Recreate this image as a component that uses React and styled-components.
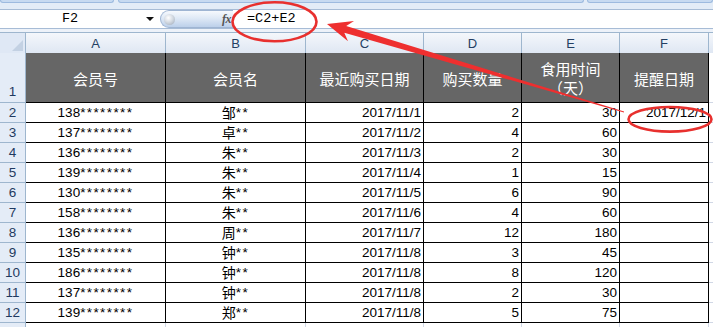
import React from "react";
import styled, { createGlobalStyle } from "styled-components";

const GlobalStyle = createGlobalStyle`
  html, body { margin: 0; padding: 0; background: #fff; }
  body { font-family: "Liberation Sans", Arial, sans-serif; }
`;

const Frame = styled.div`
  position: relative;
  width: 713px;
  height: 327px;
  overflow: hidden;
  background: #fff;
`;

const TopStrip = styled.div`
  display: flex;
  align-items: flex-start;
  height: 9px;
  background: #e3ecf7;
`;

const Tab = styled.div`
  box-sizing: border-box;
  height: 3px;
  width: ${(p) => (p.$w ? `${p.$w}px` : "auto")};
  flex: ${(p) => (p.$grow ? "1" : "none")};
  margin-left: ${(p) => p.$ml || 0}px;
  background: #c7daf1;
  border: 1px solid #9dbadf;
  border-top: none;
  border-radius: 0 0 3px 3px;
`;

const FormulaRow = styled.div`
  box-sizing: border-box;
  display: flex;
  align-items: stretch;
  height: 20px;
  border-top: 1px solid #a7bcd6;
  border-bottom: 1px solid #a7bcd6;
  background: #fff;
`;

const NameBox = styled.div`
  width: 158px;
  display: flex;
  align-items: center;
`;

const MonoText = styled.span`
  font-family: "Liberation Mono", "DejaVu Sans Mono", monospace;
  font-size: 13.5px;
  color: #000;
  line-height: 18px;
`;

const NameText = styled(MonoText)`
  width: 140px;
  text-align: center;
`;

const DropArrow = styled.span`
  margin-left: 6px;
  width: 0;
  height: 0;
  border-left: 4px solid transparent;
  border-right: 4px solid transparent;
  border-top: 4px solid #111;
`;

const FxButton = styled.div`
  box-sizing: border-box;
  margin-left: 2px;
  width: 73px;
  display: flex;
  align-items: center;
  padding-left: 3px;
  border: 1px solid #9fb5d3;
  border-right: none;
  border-radius: 9px 0 0 9px;
  background: linear-gradient(#f6f9fd 0%, #dfe9f6 45%, #bcd0ea 100%);
`;

const Knob = styled.span`
  width: 11px;
  height: 11px;
  border-radius: 50%;
  background: radial-gradient(circle at 40% 35%, #ffffff 0%, #d5dbe3 45%, #9aa6b5 100%);
`;

const FxLabel = styled.span`
  margin-left: auto;
  margin-right: 2px;
  font-family: "Liberation Serif", "Times New Roman", serif;
  font-style: italic;
  font-weight: bold;
  font-size: 12px;
  color: #555;
  letter-spacing: -0.5px;
`;

const FormulaInput = styled(MonoText)`
  flex: 1;
  padding-left: 14px;
`;

const Gap = styled.div`
  height: 3px;
  background: #edf2f9;
`;

const Sheet = styled.div`
  display: grid;
  grid-template-columns: 26px 140px 140px 118px 98px 98px 89px 1fr;
  grid-template-rows: 21px 50px repeat(11, 20px) 20px;
`;

const HeadBase = styled.div`
  box-sizing: border-box;
  border-top: 1px solid #9eb6ce;
  border-right: 1px solid #9eb6ce;
  background: linear-gradient(#f4f7fb, #dfe7f3);
`;

const Corner = styled(HeadBase)`
  display: flex;
  align-items: flex-end;
  justify-content: flex-end;
  padding: 0 2px 2px 0;
  background: #dfe8f5;
`;

const CornerTri = styled.span`
  width: 11px;
  height: 11px;
  background: #c3d1e3;
  clip-path: polygon(100% 0, 100% 100%, 0 100%);
`;

const ColHead = styled(HeadBase)`
  display: flex;
  align-items: center;
  justify-content: center;
  font-size: 13px;
  color: #243f63;
  padding-top: 1px;
`;

const RowHead = styled.div`
  box-sizing: border-box;
  display: flex;
  justify-content: center;
  align-items: ${(p) => (p.$bottom ? "flex-end" : "center")};
  padding-bottom: ${(p) => (p.$bottom ? "1px" : "0")};
  border-right: 1px solid #9eb6ce;
  border-bottom: 1px solid #9eb6ce;
  background: #e4ecf7;
  font-size: 13.5px;
  line-height: 19px;
  color: #1f3a60;
`;

const HeaderCell = styled.div`
  box-sizing: border-box;
  display: flex;
  align-items: center;
  justify-content: center;
  text-align: center;
  border-right: 1px solid #000;
  border-bottom: 1px solid #000;
  background: #666666;
  color: #fff;
  font-family: "Noto Sans CJK SC", "Liberation Sans", sans-serif;
  font-size: 15px;
  line-height: 19px;
  padding-top: 1px;
`;

const Cell = styled.div`
  box-sizing: border-box;
  display: flex;
  align-items: center;
  justify-content: ${(p) => (p.$align === "right" ? "flex-end" : "center")};
  padding-right: ${(p) => (p.$align === "right" ? "2px" : "0")};
  border-right: 1px solid ${(p) => (p.$light ? "#d0d7e5" : "#000")};
  border-bottom: 1px solid ${(p) => (p.$light ? "#d0d7e5" : "#000")};
  background: #fff;
  color: #000;
  font-family: "Liberation Sans", "Noto Sans CJK SC", sans-serif;
  font-size: 13.5px;
  line-height: 19px;
  white-space: nowrap;
`;

const Filler = styled.div`
  box-sizing: border-box;
  border-bottom: 1px solid #d0d7e5;
  background: #fff;
`;

const HeadFiller = styled(HeadBase)`
  border-right: none;
`;

const Stars = styled.span`
  letter-spacing: 1.4px;
`;

const CJK = styled.span`
  font-family: "Noto Sans CJK SC", sans-serif;
  font-size: 14px;
`;

const Overlay = styled.svg`
  position: absolute;
  left: 0;
  top: 0;
  width: 713px;
  height: 327px;
  pointer-events: none;
`;

const rows = [
  ["138", "邹", "2017/11/1", 2, 30, "2017/12/1"],
  ["137", "卓", "2017/11/2", 4, 60],
  ["136", "朱", "2017/11/3", 2, 30],
  ["139", "朱", "2017/11/4", 1, 15],
  ["130", "朱", "2017/11/5", 6, 90],
  ["158", "朱", "2017/11/6", 4, 60],
  ["136", "周", "2017/11/7", 12, 180],
  ["135", "钟", "2017/11/8", 3, 45],
  ["186", "钟", "2017/11/8", 8, 120],
  ["137", "钟", "2017/11/8", 2, 30],
  ["139", "郑", "2017/11/8", 5, 75],
];

const cols = ["A", "B", "C", "D", "E", "F"];

// Tapered annotation arrow geometry
const T = [327, 24];
const E = [624, 112];
const len = Math.hypot(E[0] - T[0], E[1] - T[1]);
const u = [(E[0] - T[0]) / len, (E[1] - T[1]) / len];
const n = [-u[1], u[0]];
const at = (d, w) => [T[0] + u[0] * d + n[0] * w, T[1] + u[1] * d + n[1] * w];
const arrowPts = [
  T,
  at(25, -10.5),
  at(19, -3.4),
  [E[0] - n[0] * 0.4, E[1] - n[1] * 0.4],
  [E[0] + n[0] * 0.4, E[1] + n[1] * 0.4],
  at(19, 3.4),
  at(25, 10.5),
]
  .map((p) => `${p[0].toFixed(1)},${p[1].toFixed(1)}`)
  .join(" ");

export default function App() {
  return (
    <>
      <GlobalStyle />
      <Frame>
        <TopStrip>
          <Tab $w={114} />
          <Tab $w={466} $ml={4} />
          <Tab $grow $ml={3} />
        </TopStrip>
        <FormulaRow>
          <NameBox>
            <NameText>F2</NameText>
            <DropArrow />
          </NameBox>
          <FxButton>
            <Knob />
            <FxLabel>fx</FxLabel>
          </FxButton>
          <FormulaInput>=C2+E2</FormulaInput>
        </FormulaRow>
        <Gap />
        <Sheet>
          <Corner>
            <CornerTri />
          </Corner>
          {cols.map((c) => (
            <ColHead key={c}>{c}</ColHead>
          ))}
          <HeadFiller />

          <RowHead $bottom>1</RowHead>
          <HeaderCell>会员号</HeaderCell>
          <HeaderCell>会员名</HeaderCell>
          <HeaderCell>最近购买日期</HeaderCell>
          <HeaderCell>购买数量</HeaderCell>
          <HeaderCell>
            食用时间
            <br />
            （天）
          </HeaderCell>
          <HeaderCell>提醒日期</HeaderCell>
          <Filler />

          {rows.map((r, i) => (
            <React.Fragment key={i}>
              <RowHead>{i + 2}</RowHead>
              <Cell>
                {r[0]}
                <Stars>********</Stars>
              </Cell>
              <Cell>
                <CJK>{r[1]}</CJK>
                <Stars>**</Stars>
              </Cell>
              <Cell $align="right">{r[2]}</Cell>
              <Cell $align="right">{r[3]}</Cell>
              <Cell $align="right">{r[4]}</Cell>
              <Cell $align="right">{r[5] || ""}</Cell>
              <Filler />
            </React.Fragment>
          ))}

          <RowHead />
          {cols.map((c) => (
            <Cell key={c} $light />
          ))}
          <Filler />
        </Sheet>

        <Overlay viewBox="0 0 713 327">
          <ellipse cx="274.5" cy="21.8" rx="42" ry="19.5" fill="none" stroke="#e8302e" strokeWidth="2.6" />
          <ellipse cx="670" cy="119.3" rx="41.5" ry="12.3" fill="none" stroke="#e8302e" strokeWidth="2.6" />
          <polygon points={arrowPts} fill="#ee2f2f" />
        </Overlay>
      </Frame>
    </>
  );
}
